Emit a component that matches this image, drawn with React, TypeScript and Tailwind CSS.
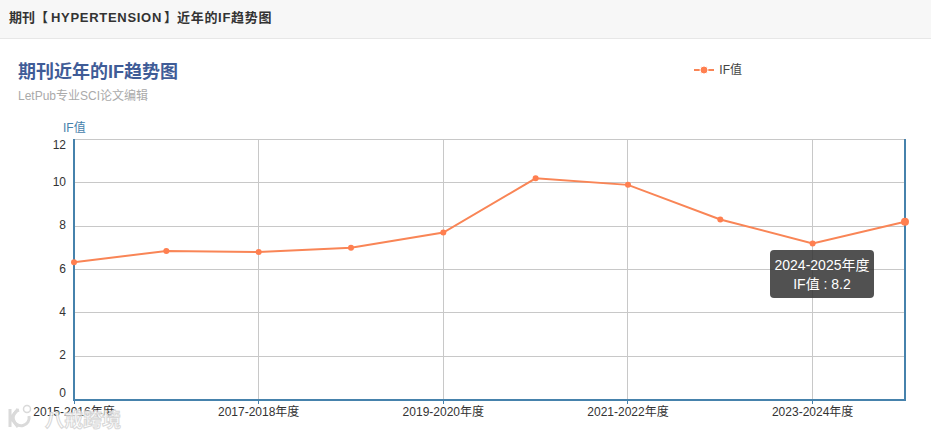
const FONT = '"Liberation Sans", "Noto Sans CJK SC", sans-serif';
const values = [6.33, 6.85, 6.8, 7.0, 7.7, 10.2, 9.9, 8.3, 7.2, 8.2];
const X0 = 74;
const STEP = 92.33;
const Y = (v: number) => 399.4 - v * 21.67;
const px = (i: number) => X0 + i * STEP;
const yTicks = [
  { v: 0, y: 397 },
  { v: 2, y: 359 },
  { v: 4, y: 316 },
  { v: 6, y: 273 },
  { v: 8, y: 229 },
  { v: 10, y: 186 },
  { v: 12, y: 149 },
];
const xLabels = [
  { i: 0, t: "2015-2016年度" },
  { i: 2, t: "2017-2018年度" },
  { i: 4, t: "2019-2020年度" },
  { i: 6, t: "2021-2022年度" },
  { i: 8, t: "2023-2024年度" },
];

function Chart() {
  const pts = values.map((v, i) => `${px(i)},${Y(v)}`).join(" ");
  return (
    <svg width="931" height="320" viewBox="0 116 931 320" className="block" style={{ fontFamily: FONT }}>
      <text x="63" y="132" fontSize="12" fill="#4682ac">IF值</text>
      {yTicks.map(({ v, y }) => (
        <g key={v}>
          <line x1="74" x2="905" y1={Math.floor(Y(v)) + 0.5} y2={Math.floor(Y(v)) + 0.5} stroke="#c8c8c8" />
          <text x="66" y={y} fontSize="12" fill="#333" textAnchor="end">{v}</text>
        </g>
      ))}
      {xLabels.map(({ i, t }) => (
        <g key={i}>
          {i > 0 && <line x1={Math.floor(px(i)) + 0.5} x2={Math.floor(px(i)) + 0.5} y1="139" y2="399" stroke="#c8c8c8" />}
          <line x1={Math.floor(px(i)) + 0.5} x2={Math.floor(px(i)) + 0.5} y1="399" y2="404" stroke="#4682ac" />
          <text x={px(i)} y="416" fontSize="12" fill="#333" textAnchor="middle">{t}</text>
        </g>
      ))}
      <line x1="74" x2="74" y1="139" y2="401" stroke="#4682ac" strokeWidth="2" />
      <line x1="905" x2="905" y1="139" y2="401" stroke="#4682ac" strokeWidth="2" />
      <line x1="73" x2="906" y1="400" y2="400" stroke="#4682ac" strokeWidth="2" />
      <polyline points={pts} fill="none" stroke="#f98556" strokeWidth="2" />
      {values.map((v, i) => (
        <circle key={i} cx={px(i)} cy={Y(v)} r={i === 9 ? 4 : 3} fill="#ff7f50" />
      ))}
      <g fill="none" stroke="#d6d6d6" strokeWidth="3" opacity="0.9">
        <path d="M10 409v18M18 409l-7 9 7 9" />
        <path d="M29 416a8 8 0 1 1 -10 -6" />
        <circle cx="27" cy="409" r="3.5" strokeWidth="1.5" />
      </g>
      <text x="45" y="427" fontSize="19" fontWeight="700" fill="#fff" stroke="#d4d4d4" strokeWidth="1" opacity="0.9">八戒跨境</text>
    </svg>
  );
}

export default function App() {
  return (
    <div className="relative w-[931px] h-[436px] overflow-hidden bg-white" style={{ fontFamily: FONT }}>
      <div className="h-[39px] bg-[#f7f7f7] border-b border-[#e7e7e7] pl-[9px] pb-[3px] flex items-center">
        <h1 className="text-[13px] font-bold text-[#333] leading-none">
          期刊【<span className="ml-[3px] mr-[2px] tracking-[0.7px]">HYPERTENSION</span>】<span className="tracking-[0.7px]">近年的IF趋势图</span>
        </h1>
      </div>
      <div className="flex items-start justify-between h-[77px]">
        <div className="pl-[18px] pt-[23px]">
          <h2 className="text-[18px] leading-[20px] font-bold text-[#3f5c97]">期刊近年的IF趋势图</h2>
          <p className="mt-[7px] text-[12px] leading-[14px] text-[#aaa]">LetPub专业SCI论文编辑</p>
        </div>
        <div className="flex items-center gap-[5px] mr-[189px] mt-[24px]">
          <svg width="20" height="10" viewBox="0 0 20 10">
            <line x1="0" x2="20" y1="5" y2="5" stroke="#f98556" strokeWidth="2" />
            <circle cx="10" cy="5" r="4" fill="#ff7f50" stroke="#fff" strokeWidth="1" />
          </svg>
          <span className="text-[12px] leading-[14px] text-[#444]">IF值</span>
        </div>
      </div>
      <Chart />
      <div className="absolute left-[770px] top-[250px] w-[104px] h-[48px] rounded-[4px] bg-[#333]/85 text-white text-[14px] leading-[19px] text-center pt-[6px]">
        <div>2024-2025年度</div>
        <div>IF值 : 8.2</div>
      </div>
    </div>
  );
}
